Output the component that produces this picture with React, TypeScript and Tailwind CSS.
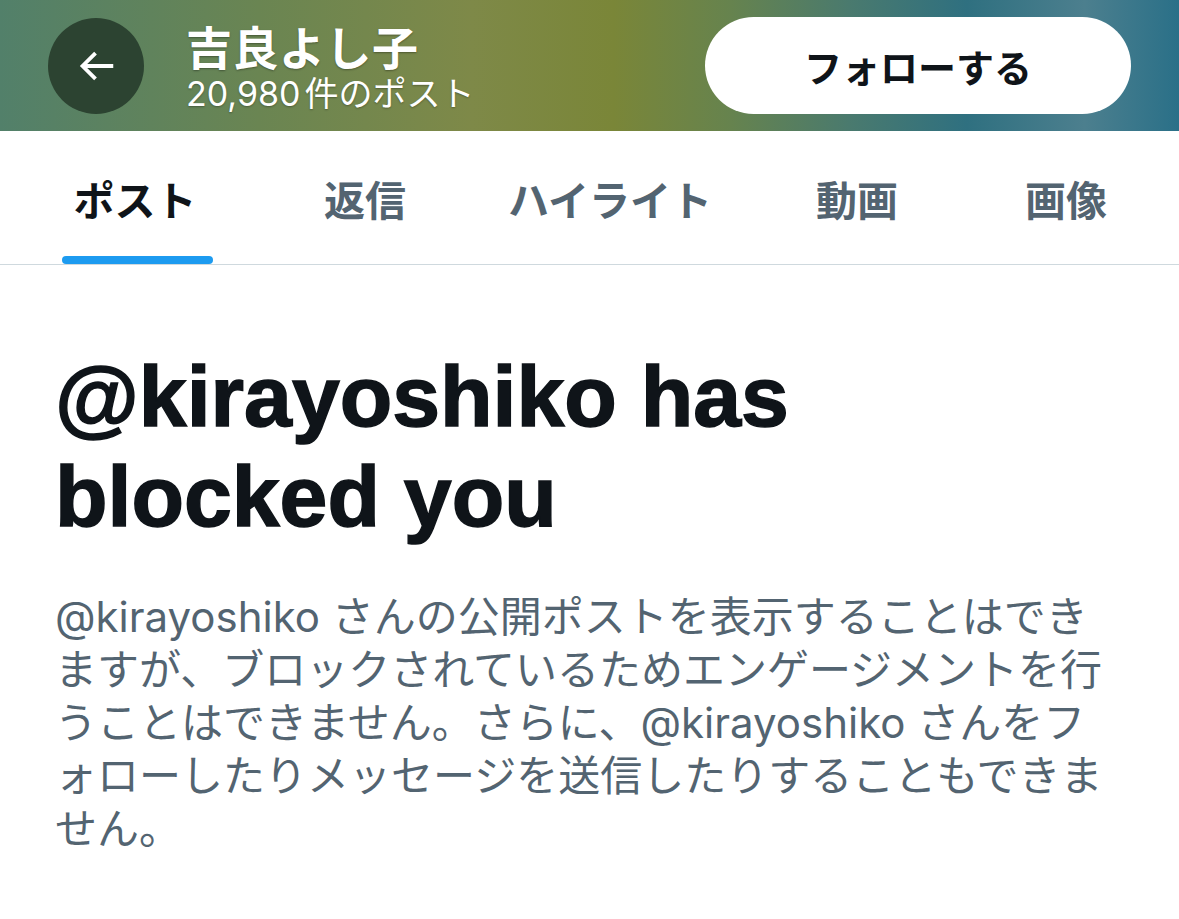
import React from 'react';

const tabs = [
  { label: 'ポスト', width: 'w-[250px]', active: true },
  { label: '返信', width: 'w-[210px]', active: false },
  { label: 'ハイライト', width: 'w-[280px]', active: false },
  { label: '動画', width: 'w-[214px]', active: false },
  { label: '画像', width: 'w-[204px]', active: false },
];

const BackArrow = () => (
  <svg viewBox="0 0 24 24" className="w-[46px] h-[46px]" fill="white">
    <path d="M7.414 13l5.043 5.04-1.414 1.42L3.586 12l7.457-7.46 1.414 1.42L7.414 11H21v2H7.414z" />
  </svg>
);

const App = () => {
  return (
    <div className="w-[1179px] h-[919px] bg-white overflow-hidden font-['Inter','Noto_Sans_CJK_JP',sans-serif]">
      {/* Banner header */}
      <header className="h-[131px] flex items-center pl-[48px] pr-[48px] bg-[linear-gradient(90deg,#52806a_0%,#6a8552_22%,#7e8948_40%,#7a8638_52%,#66834e_62%,#4a7a6e_72%,#2f7080_82%,#4c7f8e_92%,#2a7088_100%)]">
        <button className="w-[96px] h-[96px] rounded-full bg-[#2c4331] flex items-center justify-center shrink-0">
          <BackArrow />
        </button>
        <div className="ml-[42px] flex flex-col gap-[2px] text-white">
          <span className="block text-[46px] leading-[54px] font-bold tracking-[0.5px] font-['Noto_Sans_CJK_JP',sans-serif] [text-shadow:0_1px_2px_rgba(0,0,0,0.35)]">
            吉良よし子
          </span>
          <div className="flex items-baseline gap-[4px] text-[34px] leading-[40px] [text-shadow:0_1px_2px_rgba(0,0,0,0.3)]">
            <span>20,980</span>
            <span>件のポスト</span>
          </div>
        </div>
        <button className="ml-auto w-[426px] h-[97px] rounded-full bg-white flex items-center justify-center text-[38px] font-bold text-[#0f1419] font-['Noto_Sans_CJK_JP',sans-serif]">
          フォローする
        </button>
      </header>

      {/* Tabs */}
      <nav className="h-[134px] flex pl-[10px] border-b border-[#cfd9de]">
        {tabs.map((tab) => (
          <div key={tab.label} className={`${tab.width} relative h-full flex items-center justify-center pt-[2px]`}>
            <span
              className={`text-[41px] font-bold font-['Noto_Sans_CJK_JP',sans-serif] ${
                tab.active ? 'text-[#0f1419]' : 'text-[#536471]'
              }`}
            >
              {tab.label}
            </span>
            {tab.active && (
              <span className="absolute bottom-0 left-[52px] w-[151px] h-[8px] rounded-full bg-[#1d9bf0]" />
            )}
          </div>
        ))}
      </nav>

      {/* Blocked message */}
      <main className="pl-[55px] pt-[81px]">
        <h1 className="text-[86px] leading-[100px] font-bold text-[#0f1419] font-['Liberation_Sans',Arial,sans-serif] [-webkit-text-stroke:1.5px_#0f1419] w-[900px]">
          @kirayoshiko has blocked you
        </h1>
        <p className="mt-[44px] w-[1066px] text-[42px] leading-[53px] text-[#536471] font-['Inter','Noto_Sans_CJK_JP',sans-serif]">
          @kirayoshiko さんの公開ポストを表示することはできますが、ブロックされているためエンゲージメントを行うことはできません。さらに、@kirayoshiko さんをフォローしたりメッセージを送信したりすることもできません。
        </p>
      </main>
    </div>
  );
};

export default App;
